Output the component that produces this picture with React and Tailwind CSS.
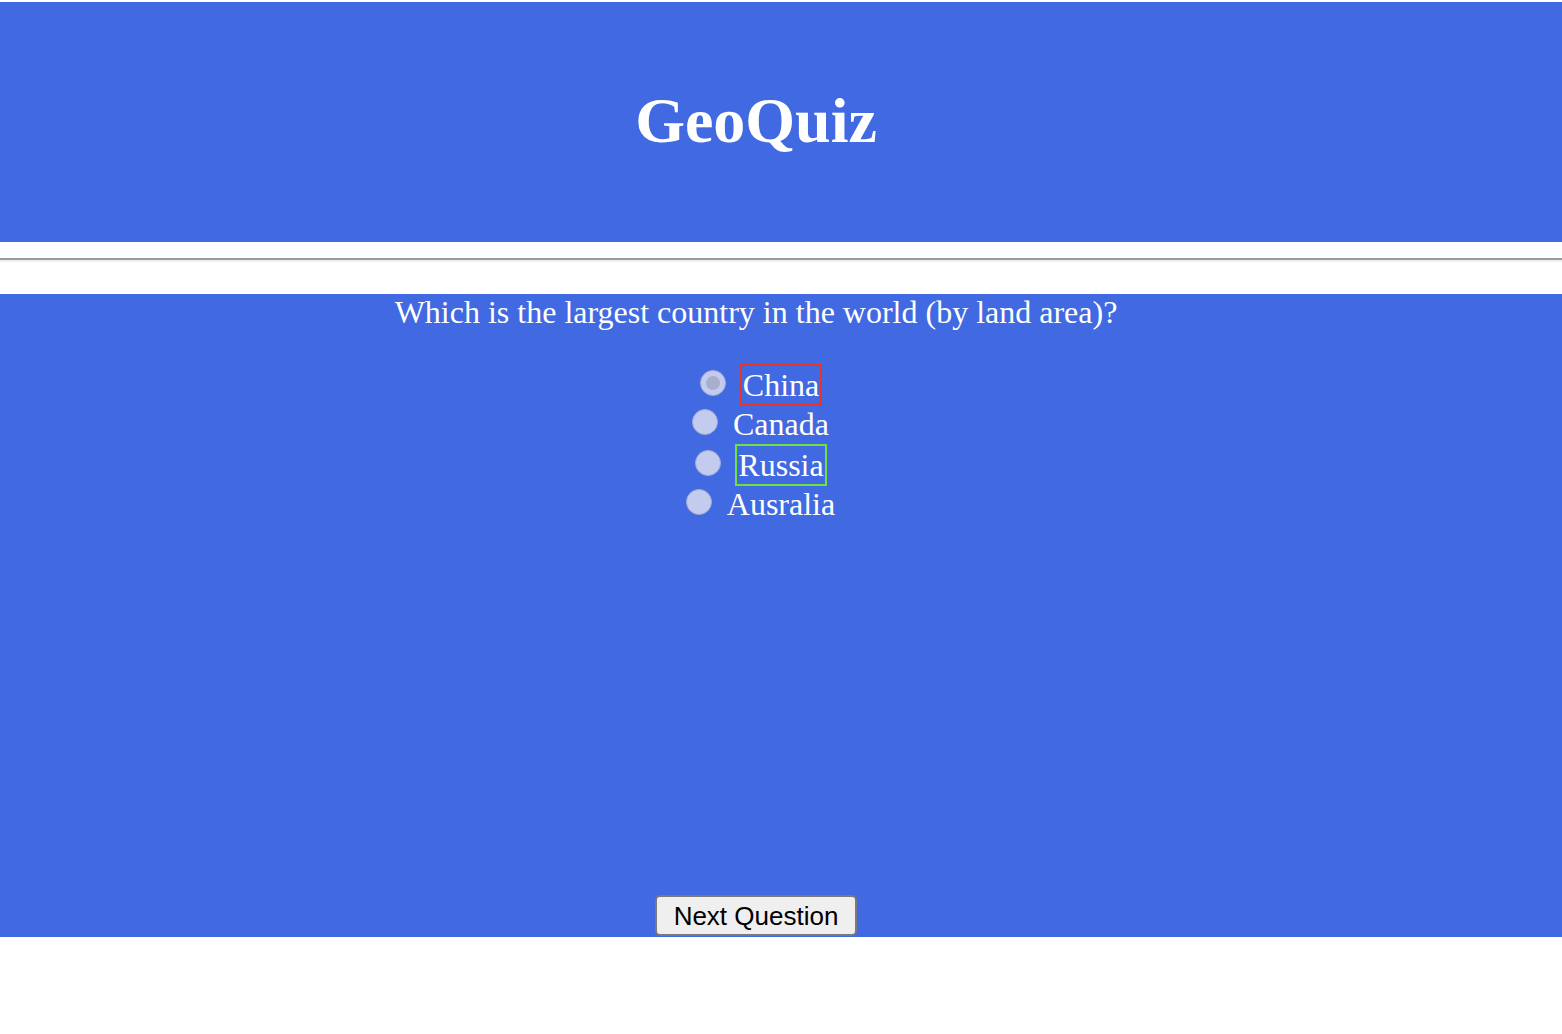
import React from 'react';

const options = [
  { name: 'China', selected: true, border: 'border-2 border-[#ea3323]' },
  { name: 'Canada', selected: false, border: '' },
  { name: 'Russia', selected: false, border: 'border-2 border-[#6fe040]' },
  { name: 'Ausralia', selected: false, border: '' },
];

function Radio({ selected }) {
  return (
    <span className="flex items-center justify-center w-[26px] h-[26px] mb-[4px] rounded-full bg-[#c3cbef] border border-[#a3abd2]">
      {selected && <span className="w-[14px] h-[14px] rounded-full bg-[#a8afcc]" />}
    </span>
  );
}

export default function App() {
  return (
    <div className="min-h-screen bg-white font-['Liberation_Serif',serif] text-white">
      <div className="pt-[2px]">
        <header className="flex items-center justify-center h-[240px] pr-[50px] bg-[#4169e1]">
          <h1 className="text-[64px] font-bold leading-[74px] mb-[3px]">GeoQuiz</h1>
        </header>
      </div>

      <hr className="mt-[16px] mb-[32px] border-t-2 border-b-2 border-t-[#9a9a9a] border-b-[#eeeeee]" />

      <main className="flex flex-col h-[643px] bg-[#4169e1]">
        <p className="pr-[50px] text-center text-[32px] leading-[37px]">
          Which is the largest country in the world (by land area)?
        </p>

        <div className="mt-[33px] flex flex-col">
          {options.map(opt => (
            <div key={opt.name} className="grid grid-cols-[1fr_auto_1fr] h-[40px] items-center">
              <div className="flex justify-end pr-[14px]">
                <Radio selected={opt.selected} />
              </div>
              <label className={`text-[32px] leading-[38px] px-[1px] ${opt.border}`}>{opt.name}</label>
              <div />
            </div>
          ))}
        </div>

        <div className="mt-auto flex justify-center pr-[50px] pb-[1px]">
          <button className="h-[41px] px-[17px] bg-[#efefef] border-2 border-solid border-[#7a7a7a] rounded-[5px] text-black text-[26px] leading-[30px] font-['Liberation_Sans',sans-serif]">
            Next Question
          </button>
        </div>
      </main>
    </div>
  );
}
